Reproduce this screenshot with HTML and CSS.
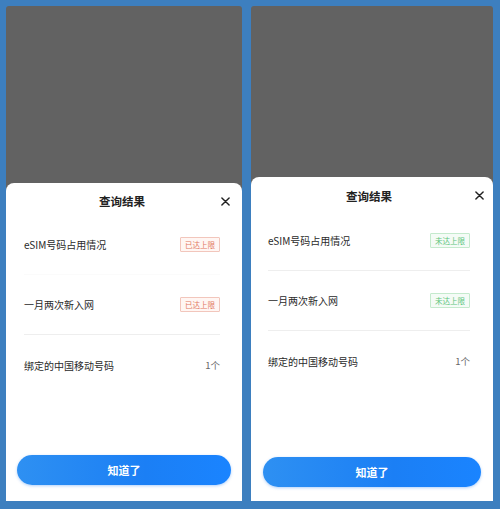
FILE: index.html
```html
<!DOCTYPE html>
<html>
<head>
  <title>查询结果</title>
  <link rel="stylesheet" href="styles.css">
</head>
<body>
  <div class="screens">
    <!-- left: limit reached -->
    <div class="phone phone-left">
      <div class="mask"></div>
      <div class="sheet">
        <div class="header">
          <h2>查询结果</h2>
          <button class="close-btn">
            <svg width="9" height="9" viewBox="0 0 10 10" fill="none" stroke="#222">
              <path d="M1 1l8 8M9 1l-8 8" stroke-width="1.6" stroke-linecap="round"/>
            </svg>
          </button>
        </div>
        <div class="row faint">
          <span class="label">eSIM号码占用情况</span>
          <span class="tag tag-red">已达上限</span>
        </div>
        <div class="row">
          <span class="label">一月两次新入网</span>
          <span class="tag tag-red">已达上限</span>
        </div>
        <div class="row">
          <span class="label">绑定的中国移动号码</span>
          <span class="count">1个</span>
        </div>
        <button class="ok-btn">知道了</button>
      </div>
    </div>

    <!-- right: limit not reached -->
    <div class="phone phone-right">
      <div class="mask"></div>
      <div class="sheet">
        <div class="header">
          <h2>查询结果</h2>
          <button class="close-btn">
            <svg width="9" height="9" viewBox="0 0 10 10" fill="none" stroke="#222">
              <path d="M1 1l8 8M9 1l-8 8" stroke-width="1.6" stroke-linecap="round"/>
            </svg>
          </button>
        </div>
        <div class="row">
          <span class="label">eSIM号码占用情况</span>
          <span class="tag tag-green">未达上限</span>
        </div>
        <div class="row">
          <span class="label">一月两次新入网</span>
          <span class="tag tag-green">未达上限</span>
        </div>
        <div class="row">
          <span class="label">绑定的中国移动号码</span>
          <span class="count">1个</span>
        </div>
        <button class="ok-btn">知道了</button>
      </div>
    </div>
  </div>
</body>
</html>
```

FILE: styles.css
```css
html, body {
  margin: 0;
  height: 100%;
}

body {
  background: #3d7fbf;
  font-family: "Noto Sans CJK SC", "Noto Sans", sans-serif;
  color: #333;
}

.screens {
  display: flex;
  gap: 9px;
  height: 100%;
  box-sizing: border-box;
  padding: 6px 7px 8px 6px;
}

.phone {
  display: flex;
  flex-direction: column;
}

.phone-left {
  width: 236px;
}

.phone-right {
  width: 242px;
}

.mask {
  flex: 1;
  background: #626262;
  border-radius: 3px 3px 0 0;
}

.sheet {
  background: #fff;
  border-radius: 8px 8px 0 0;
  margin-top: -6px;
  display: flex;
  flex-direction: column;
}

.phone-left .sheet {
  height: 318px;
  padding: 0 22px 0 18px;
}

.phone-right .sheet {
  height: 324px;
  padding: 0 23px 0 17px;
}

.header {
  position: relative;
  height: 28px;
  display: flex;
  align-items: center;
  justify-content: center;
  padding-top: 4px;
}

.phone-right .header {
  height: 30px;
}

.header h2 {
  margin: 0;
  font-size: 11.5px;
  font-weight: 600;
  color: #222;
}

.close-btn {
  position: absolute;
  right: -10px;
  top: 14px;
  background: transparent;
  border: none;
  padding: 0;
  line-height: 0;
}

.phone-right .close-btn {
  right: -14px;
  top: 14px;
}

.row {
  height: 60px;
  display: flex;
  align-items: center;
  justify-content: space-between;
  border-bottom: 1px solid #eee;
  box-sizing: border-box;
}

.row.faint {
  border-bottom-color: #fbfbfb;
}

.row:last-of-type {
  border-bottom: none;
}

.label {
  font-size: 10px;
  color: #2a2a2a;
}

.tag {
  font-size: 7.5px;
  line-height: 11px;
  padding: 1px 4px;
  border: 1px solid;
  border-radius: 1px;
}

.tag-red {
  color: #e2785f;
  border-color: #f2c6bc;
  background: #fff6f3;
}

.tag-green {
  color: #5cc47b;
  border-color: #c4eacd;
  background: #f4fbf6;
}

.count {
  font-size: 9.5px;
  color: #666;
}

.ok-btn {
  margin: auto -11px 16px -7px;
  height: 30px;
  border: none;
  border-radius: 15px;
  background: linear-gradient(90deg, #2e90f2, #1b7ff5 60%, #1a84ff);
  color: #fff;
  font-family: inherit;
  font-size: 11px;
  font-weight: 600;
  box-shadow: 0 1px 3px rgba(30, 120, 240, 0.35);
}

.phone-right .ok-btn {
  margin: auto -11px 14px -5px;
}
```
